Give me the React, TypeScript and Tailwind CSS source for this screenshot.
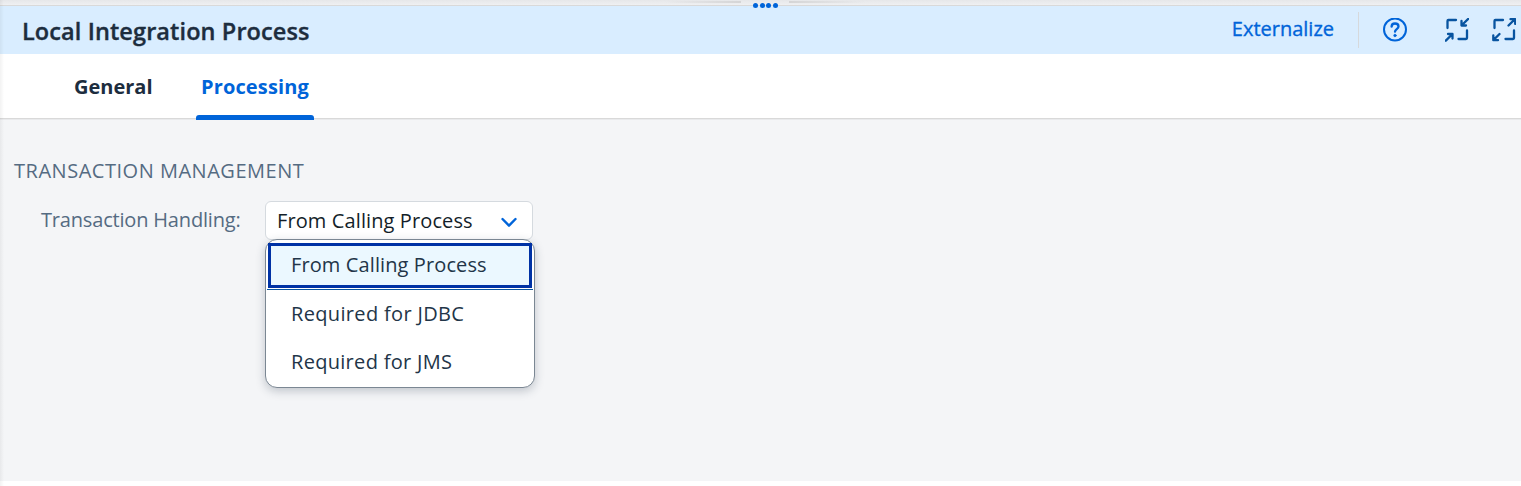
const options = [
  { label: 'From Calling Process', style: 'tracking-[0.11px]' },
  { label: 'Required for JDBC', style: 'mt-[2px] tracking-[0.34px]' },
  { label: 'Required for JMS', style: 'tracking-[0.3px]' },
];

function HelpIcon() {
  return (
    <svg className="h-6 w-6 shrink-0" viewBox="0 0 24 24" fill="none" stroke="#0064d9" strokeWidth="2" strokeLinecap="round">
      <circle cx="12" cy="11.500" r="11" />
      <path d="M8.600 8.700C8.600 6.700 10 5.500 12 5.500s3.500 1.200 3.500 3c0 2.600-3.500 2.700-3.500 5.200" strokeWidth="2.300" />
      <circle cx="12" cy="17.500" r="1.300" fill="#0064d9" strokeWidth="0.600" />
    </svg>
  );
}

function CollapseIcon() {
  return (
    <svg className="h-6 w-6 shrink-0" viewBox="0 0 24 24" fill="none" stroke="#0854a0" strokeWidth="2.300" strokeLinecap="round" strokeLinejoin="round">
      <path d="M11 2H3.400Q2.500 2 2.500 3V10M22 12.500v7.600Q22 21 21 21H13.500" />
      <path d="M23.300 .800L17 7M16.500 3v4.500h4.500M.800 22.700L7 16.500M3 16h4.500v4.500" />
    </svg>
  );
}

function ExpandIcon() {
  return (
    <svg className="h-6 w-6 shrink-0" viewBox="0 0 24 24" fill="none" stroke="#0854a0" strokeWidth="2.300" strokeLinecap="round" strokeLinejoin="round">
      <path d="M11 2H3.400Q2.500 2 2.500 3V10M22 12.500v7.600Q22 21 21 21H13.500" />
      <path d="M16.500 7.500l6.500-6.500M18.500 1.200h4.700v4.700M7.500 16l-6 6M1.300 17.500v4.700h4.700" />
    </svg>
  );
}

export default function App() {
  return (
    <div className="relative flex h-[486px] w-full flex-col overflow-hidden bg-white font-['Open_Sans','Noto_Sans',sans-serif] text-xl text-[#223548]">
      <div className="h-[5px] shrink-0 bg-linear-to-b from-[#e6e7e9] to-[#eff0f2]" />
      <div className="absolute top-px left-[665px] flex w-[200px] justify-between">
        <span className="h-0.5 w-[76px] bg-linear-to-l from-[#d5d5d6] to-transparent" />
        <span className="h-0.5 w-[76px] bg-linear-to-r from-[#d5d5d6] to-transparent" />
      </div>
      <div className="absolute top-[3px] left-[753px] flex gap-[1.500px]">
        {[0, 1, 2, 3].map((dot) => (
          <span key={dot} className="size-[5px] rounded-full bg-[#0064d9]" />
        ))}
      </div>
      <header className="flex h-[49px] shrink-0 items-center border-t border-[#d9d9d9] bg-[#d9edff] pl-[22px]">
        <h1 className="pt-0.5 text-[23.500px] leading-8 font-semibold tracking-[0.100px] whitespace-nowrap text-[#1d2d3e] [-webkit-text-stroke:0.35px_#1d2d3e]">
          Local Integration Process
        </h1>
        <div className="ml-auto flex items-center">
          <button className="-mt-0.5 leading-6 text-[#0064d9] [-webkit-text-stroke:0.35px_#0064d9]">Externalize</button>
          <span className="ml-6 h-9 w-px bg-[#d6d9dc]" />
          <span className="ml-6"><HelpIcon /></span>
          <span className="ml-[38px]"><CollapseIcon /></span>
          <span className="mr-[5px] ml-[23px]"><ExpandIcon /></span>
        </div>
      </header>
      <nav className="flex h-[65px] shrink-0 border-b border-[#d9d9d9] pl-[74px] font-bold">
        <button className="h-[66px] w-[122px] text-left text-[#1d2d3e]">General</button>
        <button className="relative h-[66px] w-[118px] tracking-[0.160px] text-[#0064d9]">
          Processing
          <span className="absolute bottom-0 left-0 h-[5px] w-full rounded-t-[3px] bg-[#0064d9]" />
        </button>
      </nav>
      <main className="h-[362px] shrink-0 border-t border-[#e9eaec] bg-[#f4f5f7] pt-[37px] text-[#556b82]">
        <h2 className="pl-[14px] leading-7 tracking-[0.520px]">TRANSACTION MANAGEMENT</h2>
        <div className="mt-4 flex pl-[41px]">
          <span className="w-56 pt-[5px] leading-7 tracking-[-0.180px]">Transaction Handling:</span>
          <div className="relative flex h-[39px] w-[268px] items-center justify-between rounded-md border border-[#d5dadf] bg-white pr-[15px] pl-[11px] text-[#131e29]">
            <span className="tracking-[0.110px]">From Calling Process</span>
            <svg className="mt-1 h-[11px] w-4" viewBox="0 0 16 11" fill="none" stroke="#0064d9" strokeWidth="2.400" strokeLinecap="round" strokeLinejoin="round">
              <path d="M1.500 2L8 8.700L14.500 2" />
            </svg>
            <ul className="absolute top-[37px] -left-px h-[149px] w-[270px] rounded-xl border border-[#7b8793] bg-white px-[2px] pt-[3px] text-[#223548] shadow-[0_3px_10px_rgba(34,53,72,0.25)]">
              {options.map(({ label, style }, index) => (
                <li
                  key={label}
                  className={
                    (index === 0
                      ? 'relative h-[45px] border-[3px] border-[#0032a5] bg-[#ebf8ff] pl-5 leading-[37px] '
                      : 'h-12 pl-[23px] leading-[48px] ') + style
                  }
                >
                  {label}
                  {index === 0 && <span className="absolute -bottom-[5px] -left-1 h-px w-[266px] bg-[#0854a0]" />}
                </li>
              ))}
            </ul>
          </div>
        </div>
      </main>
      <div className="absolute top-0 left-0 h-[486px] w-1 bg-linear-to-r from-black/5 to-transparent" />
    </div>
  );
}
